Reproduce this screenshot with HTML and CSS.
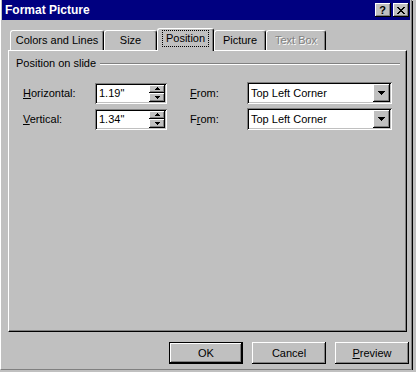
FILE: index.html
```html
<!DOCTYPE html>
<html>
<head>
    <title>Format Picture</title>
    <link rel="stylesheet" href="styles.css">
</head>
<body>
    <div class="dialog">
        <div class="title-bar">
            <span class="title-text">Format Picture</span>
            <div class="caption-buttons">
                <div class="caption-button help">?</div>
                <div class="caption-button">
                    <svg width="8" height="7" viewBox="0 0 8 7">
                        <path d="M0 0h2v1H0z M6 0h2v1H6z M1 1h2v1H1z M5 1h2v1H5z M2 2h4v1H2z M3 3h2v1H3z M2 4h4v1H2z M1 5h2v1H1z M5 5h2v1H5z M0 6h2v1H0z M6 6h2v1H6z" fill="#000"/>
                    </svg>
                </div>
            </div>
        </div>

        <div class="tabs">
            <div class="tab tab-colors">Colors and Lines</div>
            <div class="tab tab-size">Size</div>
            <div class="tab tab-position active"><span class="focus">Position</span></div>
            <div class="tab tab-picture">Picture</div>
            <div class="tab tab-textbox disabled">Text Box</div>
        </div>

        <div class="tab-panel">
            <div class="group-title">
                <span>Position on slide</span>
                <div class="group-line"></div>
            </div>

            <div class="field-grid">
                <label class="field-label"><u>H</u>orizontal:</label>
                <div class="spin-box">
                    <span class="spin-value">1.19"</span>
                    <div class="spin-buttons">
                        <div class="spin-button">
                            <svg width="5" height="3" viewBox="0 0 5 3"><path d="M2 0h1v1H2z M1 1h3v1H1z M0 2h5v1H0z" fill="#000"/></svg>
                        </div>
                        <div class="spin-button">
                            <svg width="5" height="3" viewBox="0 0 5 3"><path d="M0 0h5v1H0z M1 1h3v1H1z M2 2h1v1H2z" fill="#000"/></svg>
                        </div>
                    </div>
                </div>
                <label class="field-label"><u>F</u>rom:</label>
                <div class="combo-box">
                    <span class="combo-value">Top Left Corner</span>
                    <div class="combo-button">
                        <svg width="7" height="4" viewBox="0 0 7 4"><path d="M0 0h7v1H0z M1 1h5v1H1z M2 2h3v1H2z M3 3h1v1H3z" fill="#000"/></svg>
                    </div>
                </div>

                <label class="field-label"><u>V</u>ertical:</label>
                <div class="spin-box">
                    <span class="spin-value">1.34"</span>
                    <div class="spin-buttons">
                        <div class="spin-button">
                            <svg width="5" height="3" viewBox="0 0 5 3"><path d="M2 0h1v1H2z M1 1h3v1H1z M0 2h5v1H0z" fill="#000"/></svg>
                        </div>
                        <div class="spin-button">
                            <svg width="5" height="3" viewBox="0 0 5 3"><path d="M0 0h5v1H0z M1 1h3v1H1z M2 2h1v1H2z" fill="#000"/></svg>
                        </div>
                    </div>
                </div>
                <label class="field-label">F<u>r</u>om:</label>
                <div class="combo-box">
                    <span class="combo-value">Top Left Corner</span>
                    <div class="combo-button">
                        <svg width="7" height="4" viewBox="0 0 7 4"><path d="M0 0h7v1H0z M1 1h5v1H1z M2 2h3v1H2z M3 3h1v1H3z" fill="#000"/></svg>
                    </div>
                </div>
            </div>
        </div>

        <div class="dialog-buttons">
            <button class="push-button default">OK</button>
            <button class="push-button">Cancel</button>
            <button class="push-button"><u>P</u>review</button>
        </div>
    </div>
</body>
</html>
```

FILE: styles.css
```css
body {
    margin: 0;
    background-color: #c0c0c0;
    font-family: "Liberation Sans", Arial, sans-serif;
    font-size: 11px;
    color: #000;
}

.dialog {
    box-sizing: border-box;
    width: 412px;
    height: 370px;
    padding: 0 1px 1px 1px;
    border-left: 1px solid #fff;
    border-right: 1px solid #808080;
    border-bottom: 1px solid #808080;
    box-shadow: 1px 1px 0 #000;
    display: flex;
    flex-direction: column;
}

/* Title bar */
.title-bar {
    height: 20px;
    background-color: #000080;
    color: #fff;
    display: flex;
    align-items: center;
    justify-content: space-between;
    padding: 0 1px 0 3px;
}

.title-text {
    font-weight: bold;
    font-size: 12px;
}

.caption-buttons {
    display: flex;
    gap: 2px;
}

.caption-button {
    width: 16px;
    height: 14px;
    box-sizing: border-box;
    background-color: #c0c0c0;
    box-shadow: inset -1px -1px #000, inset 1px 1px #fff, inset -2px -2px #808080;
    display: flex;
    align-items: center;
    justify-content: center;
}

.caption-button.help {
    color: #000;
    font-weight: bold;
    font-size: 11px;
    line-height: 14px;
    padding-right: 1px;
}

/* Tabs */
.tabs {
    display: flex;
    align-items: flex-end;
    height: 22px;
    margin: 8px 0 0 8px;
}

.tab {
    box-sizing: border-box;
    height: 20px;
    padding-top: 3px;
    line-height: 13px;
    text-align: center;
    border: 1px solid;
    border-color: #fff #000 transparent #fff;
    border-bottom: none;
    border-radius: 3px 3px 0 0;
    box-shadow: inset -1px 0 #808080;
    background-color: #c0c0c0;
}

.tab-colors { width: 94px; }
.tab-size { width: 53px; }
.tab-position { width: 57px; }
.tab-picture { width: 52px; }
.tab-textbox { width: 60px; }

.tab.active {
    height: 23px;
    margin-bottom: -1px;
    padding-top: 1px;
    position: relative;
    z-index: 1;
}

.tab .focus {
    display: inline-block;
    padding: 1px 3px;
    border: 1px dotted #000;
}

.tab.disabled {
    color: #808080;
    text-shadow: 1px 1px 0 #fff;
}

/* Panel */
.tab-panel {
    box-sizing: border-box;
    width: 399px;
    height: 282px;
    margin-left: 6px;
    padding: 6px 0 0 0;
    border: 1px solid;
    border-color: #fff #000 #000 #fff;
    box-shadow: inset -1px -1px #808080;
}

.group-title {
    display: flex;
    align-items: center;
    gap: 4px;
    padding: 0 6px 0 7px;
    line-height: 13px;
}

.group-line {
    flex: 1;
    border-top: 1px solid #808080;
    border-bottom: 1px solid #fff;
}

.field-grid {
    display: grid;
    grid-template-columns: 72px 95px 57px 145px;
    grid-auto-rows: 22px;
    row-gap: 4px;
    align-items: center;
    margin-top: 12px;
    padding-left: 14px;
}

.field-label {
    line-height: 13px;
}

/* Sunken fields */
.spin-box,
.combo-box {
    box-sizing: border-box;
    background-color: #fff;
    padding: 2px;
    display: flex;
    align-items: stretch;
    box-shadow: inset 1px 1px #808080, inset -1px -1px #fff, inset 2px 2px #000, inset -2px -2px #c0c0c0;
}

.spin-box {
    width: 72px;
    height: 21px;
}

.combo-box {
    width: 145px;
    height: 22px;
}

.spin-value,
.combo-value {
    flex: 1;
    padding-left: 2px;
    line-height: 17px;
}

.combo-value {
    line-height: 18px;
}

.spin-buttons {
    width: 16px;
    display: flex;
    flex-direction: column;
}

.spin-button,
.combo-button {
    box-sizing: border-box;
    background-color: #c0c0c0;
    box-shadow: inset -1px -1px #000, inset 1px 1px #fff, inset -2px -2px #808080;
    display: flex;
    align-items: center;
    justify-content: center;
}

.spin-button {
    flex: 1;
}

.spin-button svg,
.combo-button svg {
    display: block;
}

.combo-button {
    width: 17px;
}

/* Bottom buttons */
.dialog-buttons {
    display: flex;
    justify-content: flex-end;
    gap: 9px;
    margin-top: 10px;
    padding-right: 1px;
}

.push-button {
    width: 74px;
    height: 22px;
    padding: 0;
    border: none;
    background-color: #c0c0c0;
    font-family: inherit;
    font-size: 11px;
    color: #000;
    box-shadow: inset -1px -1px #000, inset 1px 1px #fff, inset -2px -2px #808080;
}

.push-button.default {
    box-shadow: inset 0 0 0 1px #000, inset -2px -2px #000, inset 2px 2px #fff, inset -3px -3px #808080;
}
```
